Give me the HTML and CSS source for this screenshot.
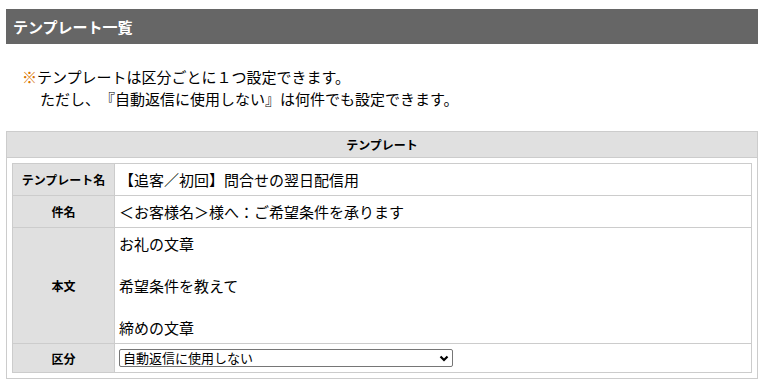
FILE: index.html
```html
<!DOCTYPE html>
<html lang="ja">
<head>
  <meta charset="UTF-8" />
  <meta name="viewport" content="width=device-width, initial-scale=1.0"/>
  <title>テンプレート一覧</title>
  <link rel="stylesheet" href="styles.css">
</head>
<body>

  <div class="page">
    <h1 class="page-title">テンプレート一覧</h1>

    <div class="notice">
      <p><span class="mark">※</span>テンプレートは区分ごとに１つ設定できます。</p>
      <p class="indent">ただし、『自動返信に使用しない』は何件でも設定できます。</p>
    </div>

    <!-- Template detail -->
    <table class="frame">
      <tr>
        <th>テンプレート</th>
      </tr>
      <tr>
        <td>
          <table class="form-table">
            <tr>
              <th>テンプレート名</th>
              <td>【追客／初回】問合せの翌日配信用</td>
            </tr>
            <tr>
              <th>件名</th>
              <td>＜お客様名＞様へ：ご希望条件を承ります</td>
            </tr>
            <tr>
              <th>本文</th>
              <td>お礼の文章<br><br>希望条件を教えて<br><br>締めの文章</td>
            </tr>
            <tr>
              <th>区分</th>
              <td>
                <div class="select-wrap">
                  <select class="kind-select">
                    <option>自動返信に使用しない</option>
                    <option>問合せ時に自動返信</option>
                    <option>翌日に自動配信</option>
                  </select>
                  <svg class="select-arrow" width="10" height="7" viewBox="0 0 10 7">
                    <path d="M1.5 1.5 L5 5 L8.5 1.5" fill="none" stroke="#000" stroke-width="2.2"/>
                  </svg>
                </div>
              </td>
            </tr>
          </table>
        </td>
      </tr>
    </table>
  </div>

</body>
</html>
```

FILE: styles.css
```css
* {
  box-sizing: border-box;
  margin: 0;
  padding: 0;
}

body {
  font-family: "Noto Sans CJK JP", "Noto Sans", sans-serif;
  font-size: 15px;
  line-height: 1.45;
  color: #000;
  background: #fff;
  text-spacing-trim: space-all;
}

.page {
  width: 752px;
  margin: 9px 0 0 6px;
}

.page-title {
  background-color: #666666;
  color: #fff;
  font-size: 15px;
  font-weight: bold;
  height: 35px;
  line-height: 35px;
  padding: 0 7px;
}

.notice {
  margin: 22px 0 21px;
  line-height: 22px;
}

.notice p {
  padding-left: 16px;
}

.notice .indent {
  padding-left: 34px;
}

.mark {
  color: #d97400;
}

.frame {
  width: 100%;
  border-collapse: collapse;
  border: 1px solid #cccccc;
}

.frame > tbody > tr > th {
  background-color: #e0e0e0;
  border-bottom: 1px solid #cccccc;
  font-size: 12px;
  font-weight: bold;
  line-height: 15px;
  padding: 5px;
  text-align: center;
}

.frame > tbody > tr > td {
  padding: 5px;
}

.form-table {
  width: 100%;
  border-collapse: collapse;
}

.form-table th,
.form-table td {
  border: 1px solid #cccccc;
}

.form-table th {
  width: 102px;
  background-color: #e0e0e0;
  font-size: 12px;
  font-weight: bold;
  line-height: 15px;
  text-align: center;
  padding: 0 4px;
}

.form-table td {
  padding: 5px 4px;
  line-height: 21px;
}

.select-wrap {
  position: relative;
  width: 334px;
}

.kind-select {
  display: block;
  width: 100%;
  height: 18px;
  appearance: none;
  -webkit-appearance: none;
  font-family: inherit;
  font-size: 13px;
  line-height: 16px;
  color: #000;
  border: 1px solid #767676;
  border-radius: 2px;
  background-color: #fff;
  padding: 0 20px 0 3px;
}

.select-arrow {
  position: absolute;
  right: 4px;
  top: 6px;
  pointer-events: none;
}
```
